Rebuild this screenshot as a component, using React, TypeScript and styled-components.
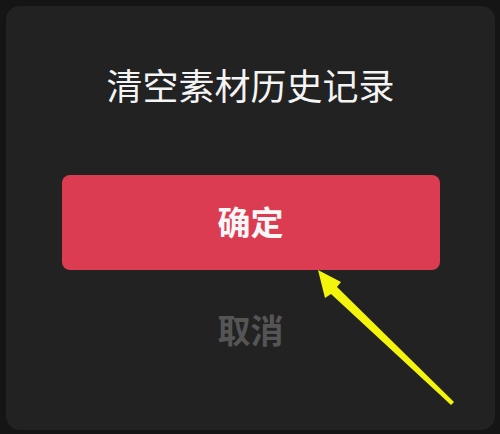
import React from "react";
import styled, { createGlobalStyle } from "styled-components";

const Global = createGlobalStyle`
  html, body { margin: 0; padding: 0; background: #151515; }
  body { font-family: "Noto Sans CJK SC", "Noto Sans", sans-serif; }
`;

const Page = styled.div`
  position: relative;
  width: 500px;
  height: 434px;
  padding: 6px 5px 4px 6px;
  box-sizing: border-box;
  background: #151515;
`;

const Panel = styled.div`
  width: 100%;
  height: 100%;
  background: #222222;
  border-radius: 14px;
  display: flex;
  flex-direction: column;
  align-items: center;
  box-sizing: border-box;
  padding-top: 60px;
`;

const Title = styled.div`
  font-size: 36px;
  line-height: 36px;
  color: #f4f4f4;
  letter-spacing: 0;
`;

const ConfirmButton = styled.button`
  margin-top: 73px;
  width: 378px;
  height: 95px;
  border: none;
  border-radius: 8px;
  background: #dc3c52;
  color: #f7f7f7;
  font-family: inherit;
  font-size: 33px;
  font-weight: 700;
  display: flex;
  align-items: center;
  justify-content: center;
  padding: 0;
  padding-bottom: 4px;
  box-sizing: border-box;
`;

const CancelButton = styled.div`
  margin-top: 43px;
  font-size: 33px;
  line-height: 33px;
  font-weight: 700;
  color: #555555;
`;

const Arrow = styled.svg`
  position: absolute;
  left: 0;
  top: 0;
  width: 500px;
  height: 434px;
  pointer-events: none;
`;

export default function App() {
  return (
    <>
      <Global />
      <Page>
        <Panel>
          <Title>清空素材历史记录</Title>
          <ConfirmButton>确定</ConfirmButton>
          <CancelButton>取消</CancelButton>
        </Panel>
        <Arrow viewBox="0 0 500 434">
          <polygon
            points="318,270 341,282 337,287 454,402 451,405 331,294 325,298"
            fill="#f4f40c"
          />
        </Arrow>
      </Page>
    </>
  );
}
